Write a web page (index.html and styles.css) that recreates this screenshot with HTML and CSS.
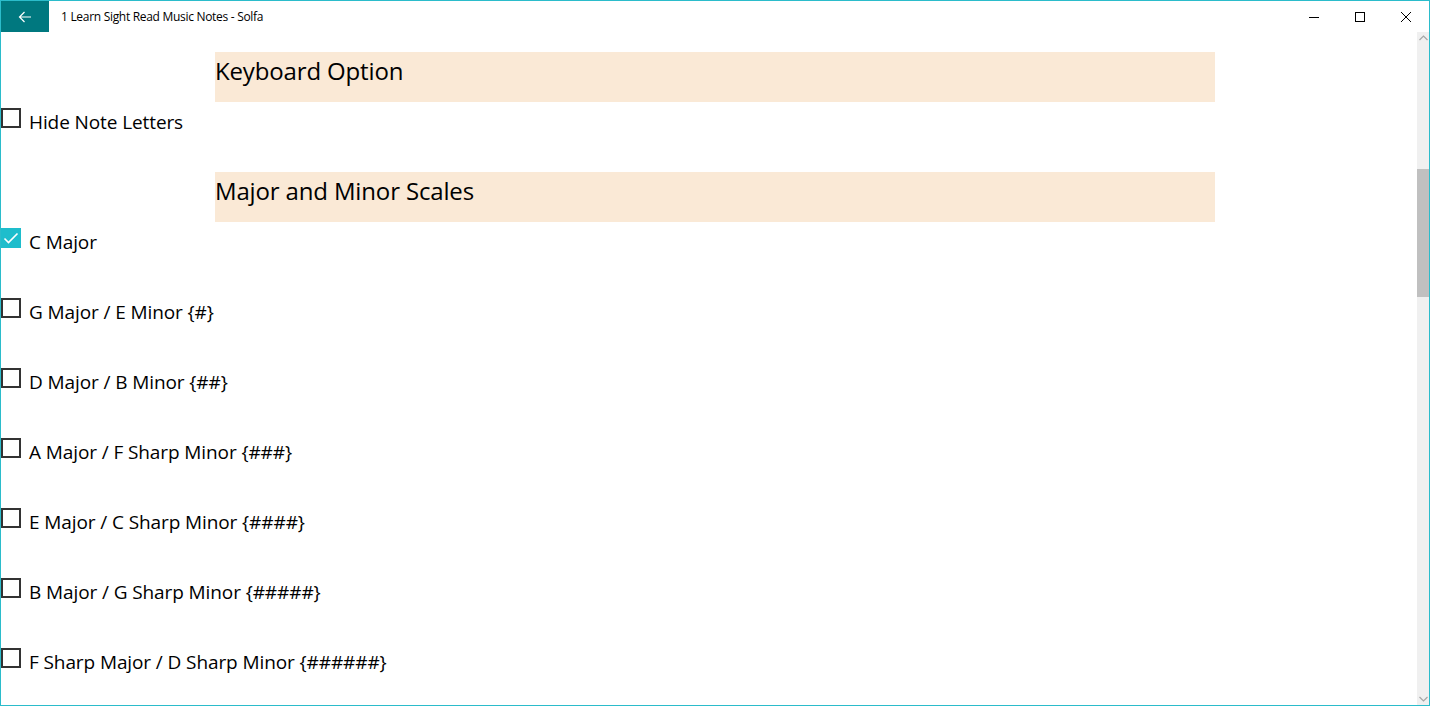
FILE: index.html
```html
<!DOCTYPE html>
<html>
<head>
<meta charset="utf-8">
<link rel="stylesheet" href="styles.css">
</head>
<body>
<div class="window">
  <div class="titlebar">
    <div class="back">
      <svg width="14" height="12" viewBox="0 0 14 12"><path d="M13 6H1.5M6.5 1L1.5 6l5 5" fill="none" stroke="#fff" stroke-width="1.2"/></svg>
    </div>
    <div class="title">1 Learn Sight Read Music Notes - Solfa</div>
    <div class="caption">
      <div class="cbtn"><svg width="10" height="10" viewBox="0 0 10 10"><path d="M0 5.5h10" stroke="#000" stroke-width="1"/></svg></div>
      <div class="cbtn"><svg width="10" height="10" viewBox="0 0 10 10"><rect x="0.5" y="0.5" width="9" height="9" fill="none" stroke="#000" stroke-width="1"/></svg></div>
      <div class="cbtn"><svg width="10" height="10" viewBox="0 0 10 10"><path d="M0 0L10 10M10 0L0 10" stroke="#000" stroke-width="1"/></svg></div>
    </div>
  </div>
  <div class="body">
    <div class="content">
      <div class="band">Keyboard Option</div>
      <div class="row short"><span class="box"></span><span class="label">Hide Note Letters</span></div>
      <div class="band">Major and Minor Scales</div>
      <div class="row"><span class="box checked"><svg width="20" height="20" viewBox="0 0 20 20"><path d="M3.5 10.5l4 4 9-9" fill="none" stroke="#fff" stroke-width="1.6"/></svg></span><span class="label">C Major</span></div>
      <div class="row"><span class="box"></span><span class="label">G Major / E Minor {#}</span></div>
      <div class="row"><span class="box"></span><span class="label">D Major / B Minor {##}</span></div>
      <div class="row"><span class="box"></span><span class="label">A Major / F Sharp Minor {###}</span></div>
      <div class="row"><span class="box"></span><span class="label">E Major / C Sharp Minor {####}</span></div>
      <div class="row"><span class="box"></span><span class="label">B Major / G Sharp Minor {#####}</span></div>
      <div class="row"><span class="box"></span><span class="label">F Sharp Major / D Sharp Minor {######}</span></div>
    </div>
    <div class="scrollbar">
      <div class="arrow"><svg width="9" height="6" viewBox="0 0 9 6"><path d="M0.5 5L4.5 1l4 4" fill="none" stroke="#a6a6a6" stroke-width="1.2"/></svg></div>
      <div class="track"><div class="thumb"></div></div>
      <div class="arrow"><svg width="9" height="6" viewBox="0 0 9 6"><path d="M0.5 1L4.5 5l4-4" fill="none" stroke="#a6a6a6" stroke-width="1.2"/></svg></div>
    </div>
  </div>
</div>
</body>
</html>
```

FILE: styles.css
```css
html, body {
  margin: 0;
  padding: 0;
  background: #fff;
}
.window {
  width: 1430px;
  height: 706px;
  box-sizing: border-box;
  border: 1px solid #2bbccb;
  display: flex;
  flex-direction: column;
  overflow: hidden;
  font-family: "Open Sans", "Noto Sans", sans-serif;
  color: #000;
}
.titlebar {
  height: 31px;
  display: flex;
  align-items: stretch;
  flex: none;
}
.back {
  width: 48px;
  background: #00787f;
  display: flex;
  align-items: center;
  justify-content: center;
}
.title {
  font-size: 12px;
  line-height: 31px;
  margin-left: 12px;
  flex: 1;
  letter-spacing: -0.3px;
}
.caption {
  display: flex;
}
.cbtn {
  width: 46px;
  display: flex;
  align-items: center;
  justify-content: center;
}
.body {
  flex: 1;
  display: flex;
  min-height: 0;
}
.content {
  flex: 1;
  display: flex;
  flex-direction: column;
  padding-top: 20px;
}
.band {
  margin-left: 214px;
  width: 1000px;
  height: 50px;
  background: #fae9d6;
  font-size: 24px;
  line-height: 38px;
  letter-spacing: -0.15px;
  flex: none;
}
.row {
  display: flex;
  align-items: flex-start;
  height: 70px;
  flex: none;
}
.band + .row {
  margin-top: 6px;
}
.row.short {
  height: 64px;
}
.box {
  width: 20px;
  height: 20px;
  box-sizing: border-box;
  border: 2px solid #333;
  flex: none;
}
.box.checked {
  border: none;
  background: #1ebdcc;
}
.box svg {
  display: block;
}
.label {
  margin-left: 8px;
  font-size: 19px;
  line-height: 28px;
  letter-spacing: -0.1px;
}
.scrollbar {
  width: 12px;
  background: #f0f0f0;
  display: flex;
  flex-direction: column;
  flex: none;
}
.arrow {
  height: 12px;
  display: flex;
  align-items: center;
  justify-content: center;
  flex: none;
}
.track {
  flex: 1;
  padding-top: 125px;
}
.thumb {
  height: 128px;
  background: #c0c0c0;
}
```
